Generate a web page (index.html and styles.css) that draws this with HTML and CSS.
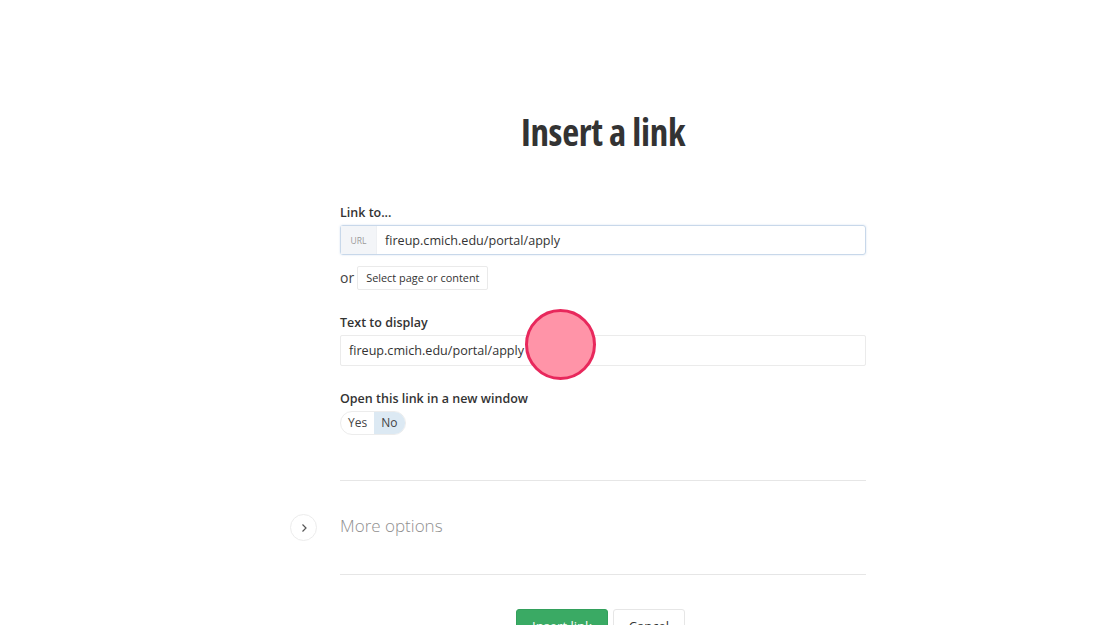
FILE: index.html
```html
<!DOCTYPE html>
<html>
<head>
<meta charset="utf-8">
<link rel="stylesheet" href="styles.css">
</head>
<body>
<div class="page">
  <h1 class="title">Insert a link</h1>
  <div class="form">
    <label class="label">Link to...</label>
    <div class="url-group">
      <span class="addon">URL</span>
      <span class="url-value">fireup.cmich.edu/portal/apply</span>
    </div>
    <div class="or-row">
      <span class="or">or</span>
      <span class="select-btn">Select page or content</span>
    </div>

    <label class="label label-text">Text to display</label>
    <div class="text-input">
      <span>fireup.cmich.edu/portal/apply</span>
      <span class="click-marker"></span>
    </div>

    <label class="label label-window">Open this link in a new window</label>
    <div class="toggle">
      <span class="toggle-opt">Yes</span>
      <span class="toggle-opt active">No</span>
    </div>

    <hr class="rule rule-top">
    <div class="more">
      <span class="more-btn">
        <svg width="10" height="10" viewBox="0 0 10 10"><path d="M3.5 1.5 L7 5 L3.5 8.5" fill="none" stroke="#555" stroke-width="1.2"/></svg>
      </span>
      <span class="more-text">More options</span>
    </div>
    <hr class="rule">
    <div class="actions">
      <span class="btn btn-primary">Insert link</span>
      <span class="btn btn-default">Cancel</span>
    </div>
  </div>
</div>
</body>
</html>
```
FILE: styles.css
```css
html, body {
  margin: 0;
  padding: 0;
  background: #ffffff;
  overflow: hidden;
  height: 625px;
}
body {
  font-family: "Open Sans", "Liberation Sans", sans-serif;
  color: #333333;
}
.page {
  width: 526px;
  margin-left: 340px;
  padding-top: 108px;
}
.title {
  margin: 0;
  text-align: center;
  font-family: "Open Sans", sans-serif;
  font-stretch: 75%;
  font-weight: 700;
  font-size: 37px;
  line-height: 48px;
  color: #333333;
  letter-spacing: -0.3px;
}
.form {
  margin-top: 47px;
  display: flex;
  flex-direction: column;
  align-items: flex-start;
}
.label {
  font-size: 12.5px;
  font-weight: 600;
  line-height: 18px;
  padding-top: 1px;
  color: #333;
}
.url-group {
  margin-top: 3px;
  width: 526px;
  height: 30px;
  box-sizing: border-box;
  border: 1px solid #c8d8ea;
  border-radius: 3px;
  display: flex;
  align-items: stretch;
  box-shadow: 0 0 2px rgba(120,160,210,0.35);
}
.addon {
  width: 35px;
  background: #f3f5f8;
  color: #9a9a9a;
  font-size: 8.5px;
  display: flex;
  align-items: center;
  justify-content: center;
  border-right: 1px solid #eef0f3;
}
.url-value {
  display: flex;
  align-items: center;
  padding-left: 8px;
  font-size: 12.6px;
  color: #333;
}
.or-row {
  margin-top: 11px;
  display: flex;
  align-items: center;
  gap: 3px;
}
.or {
  font-size: 14px;
  color: #444;
  line-height: 20px;
}
.select-btn {
  font-size: 10.9px;
  color: #333;
  border: 1px solid #eaeaea;
  border-radius: 2px;
  padding: 0 8px;
  height: 24px;
  line-height: 22px;
  box-sizing: border-box;
}
.label-text {
  margin-top: 23px;
}
.text-input {
  margin-top: 3px;
  width: 526px;
  height: 31px;
  box-sizing: border-box;
  border: 1px solid #ebebeb;
  border-radius: 2px;
  display: flex;
  align-items: center;
  padding-left: 8px;
  font-size: 12.6px;
  color: #333;
  position: relative;
}
.click-marker {
  position: absolute;
  left: 184px;
  top: -27px;
  width: 71px;
  height: 71px;
  box-sizing: border-box;
  border-radius: 50%;
  background: #ff94a8;
  border: 3px solid #e8285c;
}
.label-window {
  margin-top: 23px;
}
.toggle {
  margin-top: 3px;
  display: flex;
  height: 24px;
  box-sizing: border-box;
  border: 1px solid #ececec;
  border-radius: 12px;
  overflow: hidden;
}
.toggle-opt {
  font-size: 12px;
  color: #444;
  line-height: 22px;
  padding: 0 7px;
}
.toggle-opt.active {
  background: #dce9f3;
  padding-right: 8px;
}
.rule {
  width: 526px;
  margin: 0;
  border: 0;
  border-top: 1px solid #e6e6e6;
}
.rule-top {
  margin-top: 45px;
}
.more {
  height: 93px;
  display: flex;
  align-items: center;
  position: relative;
  width: 526px;
}
.more-btn {
  position: absolute;
  left: -50px;
  top: 33px;
  width: 27px;
  height: 27px;
  box-sizing: border-box;
  border: 1px solid #ececec;
  border-radius: 50%;
  display: flex;
  align-items: center;
  justify-content: center;
}
.more-text {
  font-size: 17px;
  font-weight: 300;
  color: #8f8f8f;
  margin-top: -4px;
}
.actions {
  align-self: center;
  margin-top: 34px;
  margin-right: 5px;
  display: flex;
  gap: 5px;
}
.btn {
  font-size: 13px;
  height: 34px;
  line-height: 32px;
  box-sizing: border-box;
  border-radius: 3px;
  padding: 0 15px;
}
.btn-primary {
  background: #3aaa64;
  border: 1px solid #33a05c;
  color: #fff;
}
.btn-default {
  background: #fff;
  border: 1px solid #e6e6e6;
  color: #333;
}
```
